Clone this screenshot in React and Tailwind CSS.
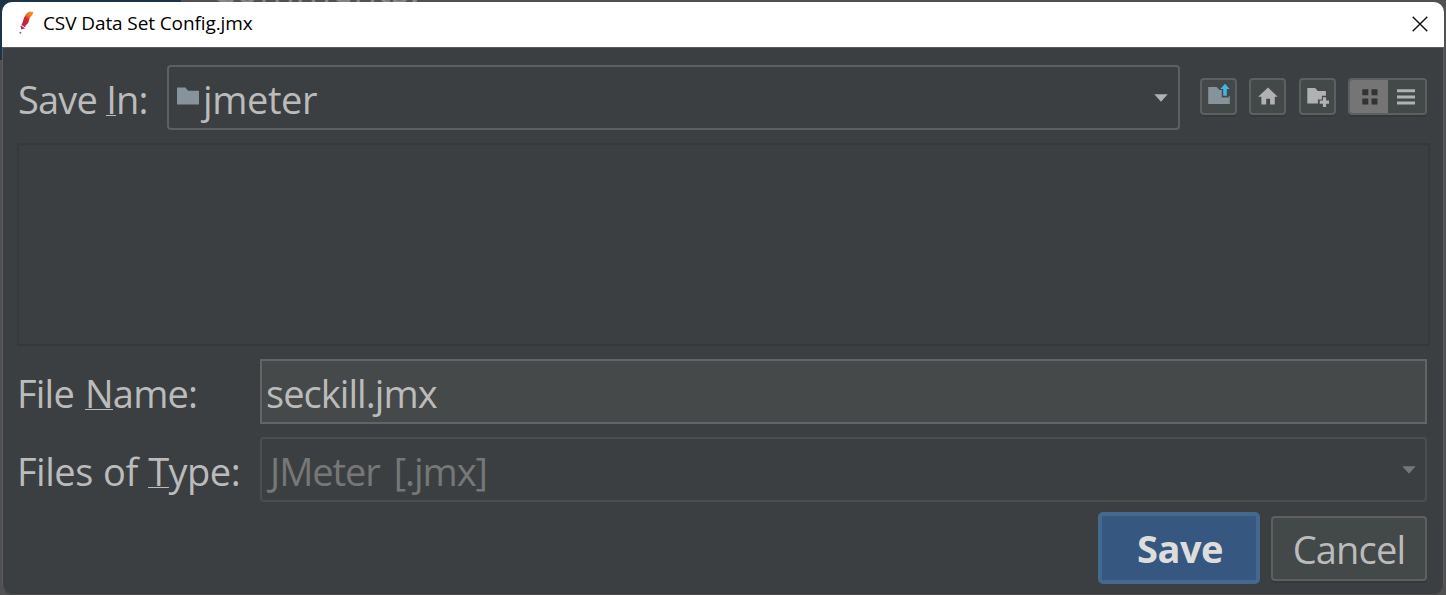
import React, { useState } from 'react';

const FONT = 'font-["Open_Sans","Noto_Sans",sans-serif]';

// small feather shown in the title bar
const FeatherIcon = () => (
  <svg width="16" height="24" viewBox="0 0 16 24" className="-mt-0.5 shrink-0">
    <defs>
      <linearGradient id="feather" gradientUnits="userSpaceOnUse" x1="14" y1="0" x2="3" y2="18">
        <stop offset="0" stopColor="#f69923" />
        <stop offset="0.28" stopColor="#ea7426" />
        <stop offset="0.45" stopColor="#d8232e" />
        <stop offset="0.75" stopColor="#c0233f" />
        <stop offset="1" stopColor="#8d3a94" />
      </linearGradient>
    </defs>
    <path d="M11.4 0.4 15.4 1 14.4 3.8 11.8 6.8 10.2 12 7.6 14.6 6.8 17.6 3.2 18.4 2.6 15.2 4.6 11.4 6 6.8 8.6 2.2Z" fill="url(#feather)" />
    <path d="m3.2 14.2 3.8 2.6" stroke="#fff" strokeWidth="1" />
    <circle cx="2.4" cy="21.8" r="1" fill="#9a5aa8" />
  </svg>
);

const CloseIcon = () => (
  <svg width="16" height="16" viewBox="0 0 16 16" fill="none" stroke="#111" strokeWidth="1.4">
    <path d="m0.7 0.7 14.6 14.6M15.3 0.7 0.7 15.3" />
  </svg>
);

const FolderIcon = () => (
  <svg width="22" height="18" viewBox="0 0 22 18" fill="#87939a" className="-mt-[3px]">
    <path d="M0 0.5h8.3l2.8 3.2H22V17.5H0z" />
  </svg>
);

const UpFolderIcon = () => (
  <svg width="22" height="22" viewBox="0 0 22 22" className="-mt-[5px] ml-px">
    <path d="M0.2 4h8.4l2.9 3h2.3v7.4h7V13h1v8H0.2z" fill="#87939a" />
    <path d="M17 0.8 21.6 6h-2.8v6.7h-3.6V6h-2.8z" fill="#40b6e0" />
  </svg>
);

const HomeIcon = () => (
  <svg width="20" height="18" viewBox="0 0 20 18" fill="#afb1b3" className="-mt-0.5">
    <path d="M10 0.5 19.8 9.7h-3V17.5h-4.7v-5.7H8.2v5.7H3.4V9.7H0.2z" />
  </svg>
);

const NewFolderIcon = () => (
  <svg width="22" height="20" viewBox="0 0 22 20" fill="#afb1b3" className="ml-0.5">
    <path d="M0.3 1h7.8l2.8 3h8v4.7h-4v3.8h-4v4H0.3z" />
    <path d="M15.9 10.2h3.2v3.4h3v3.2h-3v3.2h-3.2v-3.2h-3.2v-3.2h3.2z" />
  </svg>
);

const GridIcon = () => (
  <svg width="16" height="16" viewBox="0 0 16 16" fill="#313335">
    <path d="M0.3 0.3h6v6h-6zM9.5 0.3h6v6h-6zM0.3 9.5h6v6h-6zM9.5 9.5h6v6h-6z" />
  </svg>
);

const ListIcon = () => (
  <svg width="18" height="16" viewBox="0 0 18 16" fill="#afb1b3">
    <path d="M0 0.3h18v3H0zM0 6.4h18v3H0zM0 12.5h18v3H0z" />
  </svg>
);

const Arrow = ({ className }) => (
  <svg width="14" height="8" viewBox="0 0 14 8" className={className}>
    <path d="M0.3 0.3h13.4L7 7.8z" fill="currentColor" />
  </svg>
);

// label with the mnemonic letter underlined
const Label = ({ before, letter, after, className }) => (
  <label className={`shrink-0 whitespace-pre text-[#bbbbbb] ${className}`}>
    {before}
    <span className="relative inline-block after:absolute after:inset-x-0 after:top-[42px] after:h-px after:bg-[#bbbbbb]">{letter}</span>
    {after}
  </label>
);

const ToolButton = ({ children, title }) => (
  <button
    aria-label={title}
    className="flex h-[37px] w-[37px] items-center justify-center rounded-[4px] border-2 border-[#5e6060] bg-[#434849] shadow-[0_2px_0_#36393a]"
  >
    {children}
  </button>
);

const App = () => {
  const [fileName, setFileName] = useState('seckill.jmx');

  return (
    <div className={`relative h-[595px] w-[1446px] overflow-hidden bg-[#525151] pt-0.5 pl-0.5 pr-0.5 ${FONT}`}>
      {/* edge of the window behind the dialog */}
      <div className="absolute left-0 top-0 h-[60px] w-[181px] bg-[#1d3448]" />
      <div className="absolute left-[211px] top-0 h-0.5 w-[230px] overflow-hidden">
        <span className="block -mt-[37px] text-[39px] leading-[50px] text-[#858687]">Comments:</span>
      </div>

      <div className="relative flex h-[593px] flex-col overflow-hidden rounded-[10px] bg-[#3c3f41]">
        <header className="flex h-[45px] shrink-0 items-center bg-white pl-4 pr-4 pb-0.5">
          <FeatherIcon />
          <h1 className="-mt-0.5 ml-[9px] text-[19px] leading-6 tracking-[-0.1px] text-black">CSV Data Set Config.jmx</h1>
          <button aria-label="Close" className="ml-auto">
            <CloseIcon />
          </button>
        </header>

        <main className="flex flex-1 flex-col rounded-b-[10px] border border-[#5a5c5d] border-b-[#4b4d4e] pl-[14px] pr-4 pt-[17px] text-[38px] leading-[52px]">
          {/* directory row */}
          <div className="flex h-[65px] items-center">
            <Label before="Save " letter="I" after="n:" className="w-[150px] pl-px pt-0.5 tracking-[-0.8px]" />
            <div className="flex h-[65px] w-[1013px] items-center rounded-[4px] border-2 border-[#5e6060] pl-2 pr-[10px] text-[#bbbbbb]">
              <FolderIcon />
              <span className="ml-1 pt-0.5 tracking-[-0.4px]">jmeter</span>
              <Arrow className="ml-auto text-[#afb1b3]" />
            </div>
            <div className="-mt-0.5 ml-5 flex gap-[12.5px]">
              <ToolButton title="Up One Level"><UpFolderIcon /></ToolButton>
              <ToolButton title="Home"><HomeIcon /></ToolButton>
              <ToolButton title="Create New Folder"><NewFolderIcon /></ToolButton>
              <div className="flex h-[37px] w-[79px] overflow-hidden rounded-[4px] border-2 border-[#5e6060] shadow-[0_2px_0_#36393a]">
                <button aria-label="List" className="flex w-[38px] items-center justify-center bg-[#757575] pl-0.5"><GridIcon /></button>
                <button aria-label="Details" className="flex flex-1 items-center justify-center bg-[#434849] pr-px"><ListIcon /></button>
              </div>
            </div>
          </div>

          {/* file list, nothing in this directory */}
          <div className="-mr-[3px] mt-[13px] h-[203px] border-2 border-[#36393b]" />

          <div className="mt-[13px] flex h-[65px] items-center">
            <Label before="File " letter="N" after="ame:" className="w-[243px] pt-0.5 tracking-[-0.8px] [word-spacing:2px]" />
            <input
              value={fileName}
              onChange={(e) => setFileName(e.target.value)}
              className="h-[65px] min-w-0 flex-1 border-2 border-[#646464] bg-[#45494a] pl-1 pt-0.5 tracking-[-0.95px] text-[#bbbbbb] outline-none"
            />
          </div>

          <div className="mt-[13px] flex h-[65px] items-center">
            <Label before="Files of " letter="T" after="ype:" className="w-[243px] pt-0.5 tracking-[-0.5px] [word-spacing:1px]" />
            <div className="flex h-[65px] flex-1 items-center rounded-[4px] border-2 border-[#4c4e4e] pl-2 pr-[9px] text-[#777777]">
              <span className="pt-0.5 tracking-[-1.05px] [word-spacing:5px]">JMeter [.jmx]</span>
              <Arrow className="ml-auto" />
            </div>
          </div>

          <div className="mt-[10px] flex items-center justify-end gap-[11px]">
            <button className="h-[72px] w-[162px] rounded-[5px] border-4 border-[#43698e] bg-[#365880] pl-0.5 font-bold tracking-[-0.5px] text-[#dddddd]">
              Save
            </button>
            <button className="h-[65px] w-[156px] rounded-[4px] border-2 border-[#5e6060] bg-[#434849] pt-0.5 tracking-[-0.8px] text-[#bbbbbb] shadow-[0_2px_0_#36393a]">
              Cancel
            </button>
          </div>
        </main>
      </div>
    </div>
  );
};

export default App;
